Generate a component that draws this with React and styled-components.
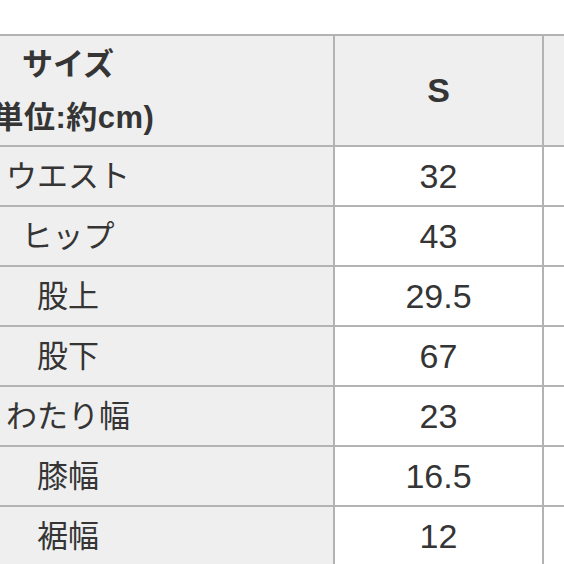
import styled, { createGlobalStyle } from "styled-components";

const GlobalStyle = createGlobalStyle`
  html, body {
    margin: 0;
    padding: 0;
    background: #ffffff;
    overflow: hidden;
  }
  body {
    font-family: "Liberation Sans", "Noto Sans CJK JP", sans-serif;
  }
`;

const Page = styled.div`
  width: 564px;
  height: 564px;
  overflow: hidden;
  padding-top: 34px;
  box-sizing: border-box;
`;

const Table = styled.table`
  border-collapse: collapse;
  margin-left: -199px;
  width: 952px;
  table-layout: fixed;
  color: #353535;
`;

const Cell = styled.td`
  border: 2px solid #b3b3b3;
  height: ${(p) => (p.$head ? "109px" : "58px")};
  padding: 0;
  text-align: center;
  vertical-align: middle;
  font-size: ${(p) => (p.$num ? "34px" : "31px")};
  line-height: 53px;
  font-weight: ${(p) => (p.$head ? 700 : 400)};
  background: ${(p) => (p.$gray ? "#efefef" : "#ffffff")};
  white-space: nowrap;
`;

const Unit = styled.span`
  letter-spacing: 0.5px;
`;

const Col = styled.col`
  width: ${(p) => p.$w}px;
`;

const rows = [
  ["ウエスト", "32"],
  ["ヒップ", "43"],
  ["股上", "29.5"],
  ["股下", "67"],
  ["わたり幅", "23"],
  ["膝幅", "16.5"],
  ["裾幅", "12"],
];

export default function App() {
  return (
    <>
      <GlobalStyle />
      <Page>
        <Table>
          <colgroup>
            <Col $w={532} />
            <Col $w={209} />
            <Col $w={211} />
          </colgroup>
          <tbody>
            <tr>
              <Cell $head $gray>
                サイズ
                <br />
                <Unit>(単位:約cm)</Unit>
              </Cell>
              <Cell $head $gray $num>S</Cell>
              <Cell $head $gray></Cell>
            </tr>
            {rows.map(([label, value]) => (
              <tr key={label}>
                <Cell $gray>{label}</Cell>
                <Cell $num>{value}</Cell>
                <Cell></Cell>
              </tr>
            ))}
          </tbody>
        </Table>
      </Page>
    </>
  );
}
